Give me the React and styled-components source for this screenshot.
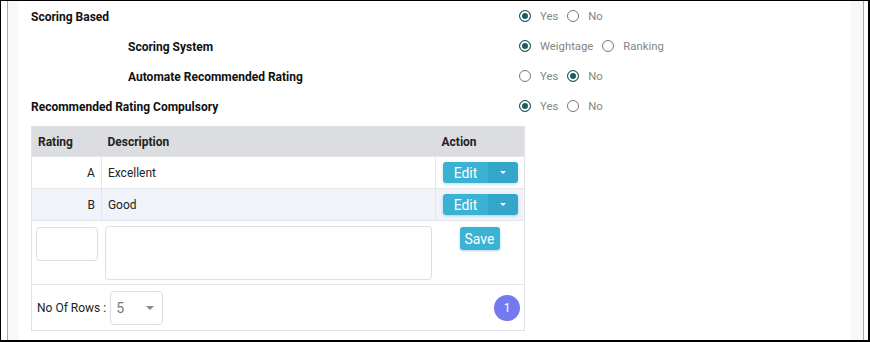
import React from "react";
import styled, { createGlobalStyle } from "styled-components";

const GlobalStyle = createGlobalStyle`
  html, body { margin: 0; padding: 0; background: #fff; }
  body { font-family: Roboto, "Liberation Sans", Arial, sans-serif; }
  * { box-sizing: border-box; }
`;

const Frame = styled.div`
  width: 870px;
  height: 342px;
  border: solid #000;
  border-width: 1px 2px 2px 1px;
  padding: 0 4px 0 6px;
  background: #fff;
  display: flex;
  overflow: hidden;
`;

const Panel = styled.div`
  flex: 1;
  display: flex;
  border-left: 1px solid #7cb9e8;
  border-right: 1px solid #7cb9e8;
  background: #f8f8f8;
  padding: 0 12px 0 10px;
`;

const Content = styled.div`
  flex: 1;
  background: #fff;
  padding: 0 0 0 13px;
`;

const FormRow = styled.div`
  display: grid;
  grid-template-columns: 488px 1fr;
  align-items: center;
  height: 30px;
`;

const FieldLabel = styled.div`
  font-size: 12px;
  font-weight: 700;
  color: #111;
  padding-left: ${(p) => (p.$indent ? "97px" : "0")};
  padding-top: 1px;
`;

const Options = styled.div`
  display: flex;
  align-items: center;
  gap: 9px;
`;

const Option = styled.label`
  display: flex;
  align-items: center;
  gap: 9px;
  font-size: 11.3px;
  color: #858585;
`;

const Radio = styled.span`
  width: 12px;
  height: 12px;
  border-radius: 50%;
  border: 1px solid ${(p) => (p.$on ? "#1f5c5b" : "#777")};
  background: ${(p) => (p.$on ? "#1f5c5b" : "#fff")};
  box-shadow: ${(p) => (p.$on ? "inset 0 0 0 2px #fff" : "none")};
`;

const Table = styled.table`
  margin-top: 5px;
  width: 494px;
  border-collapse: collapse;
  border: 1px solid #dfe1e5;
  font-size: 12px;
  color: #222;
`;

const Th = styled.th`
  background: #dcdde0;
  height: 30px;
  text-align: left;
  font-weight: 700;
  padding: 0 6px;
  width: ${(p) => p.$w || "auto"};
`;

const Tr = styled.tr`
  background: ${(p) => (p.$alt ? "#f0f3fa" : "#fff")};
  border-top: 1px solid #e4e6ea;
`;

const Td = styled.td`
  height: 32px;
  padding: 0 6px;
  text-align: ${(p) => (p.$right ? "right" : "left")};
  border-left: ${(p) => (p.$sep ? "1px solid #e4e6ea" : "none")};
  vertical-align: ${(p) => (p.$top ? "top" : "middle")};
`;

const EditGroup = styled.div`
  display: inline-flex;
  height: 21px;
  margin-left: 1px;
  border-radius: 3px;
  overflow: hidden;
  box-shadow: 0 1px 3px rgba(40, 150, 190, 0.35);
`;

const BtnPart = styled.span`
  display: flex;
  align-items: center;
  justify-content: center;
  width: ${(p) => p.$w};
  background: ${(p) => (p.$dark ? "#34a6c9" : "#3bb2d4")};
  color: #fff;
  font-size: 14px;
`;

const Caret = styled.span`
  width: 0;
  height: 0;
  border-left: ${(p) => p.$s || 3}px solid transparent;
  border-right: ${(p) => p.$s || 3}px solid transparent;
  border-top: ${(p) => p.$s || 3}px solid ${(p) => p.$color || "#fff"};
`;

const InputBox = styled.div`
  width: ${(p) => p.$w};
  height: ${(p) => p.$h};
  border: 1px solid #dcdfe3;
  border-radius: 4px;
  background: #fff;
  margin-top: ${(p) => p.$mt};
  margin-left: ${(p) => p.$ml || "0"};
`;

const SaveBtn = styled.button`
  margin: 6px 0 0 24px;
  width: 40px;
  height: 23px;
  border: none;
  border-radius: 3px;
  background: #3bb2d4;
  color: #fff;
  font-family: inherit;
  font-size: 14px;
  padding: 0;
  box-shadow: 0 1px 3px rgba(40, 150, 190, 0.35);
`;

const Footer = styled.div`
  display: flex;
  align-items: center;
  height: 45px;
  padding: 0 4px 0 5px;
  font-size: 12px;
  color: #222;
`;

const SelectBox = styled.div`
  margin-left: 4px;
  width: 53px;
  height: 34px;
  border: 1px solid #dcdfe3;
  border-radius: 4px;
  display: flex;
  align-items: center;
  justify-content: space-between;
  padding: 0 8px 0 5px;
  font-size: 14px;
  color: #777;
`;

const PageDot = styled.span`
  margin-left: auto;
  width: 26px;
  height: 26px;
  border-radius: 50%;
  background: #7479ee;
  color: #fff;
  font-size: 12px;
  display: flex;
  align-items: center;
  justify-content: center;
`;

const fields = [
  { label: "Scoring Based", opts: ["Yes", "No"], on: 0 },
  { label: "Scoring System", indent: true, opts: ["Weightage", "Ranking"], on: 0 },
  { label: "Automate Recommended Rating", indent: true, opts: ["Yes", "No"], on: 1 },
  { label: "Recommended Rating Compulsory", opts: ["Yes", "No"], on: 0 },
];

const ratings = [
  { r: "A", d: "Excellent" },
  { r: "B", d: "Good" },
];

export default function App() {
  return (
    <>
      <GlobalStyle />
      <Frame>
        <Panel>
          <Content>
            {fields.map((f) => (
              <FormRow key={f.label}>
                <FieldLabel $indent={f.indent}>{f.label}</FieldLabel>
                <Options>
                  {f.opts.map((o, i) => (
                    <Option key={o}>
                      <Radio $on={i === f.on} />
                      {o}
                    </Option>
                  ))}
                </Options>
              </FormRow>
            ))}
            <Table>
              <thead>
                <tr>
                  <Th $w="71px">Rating</Th>
                  <Th $w="335px">Description</Th>
                  <Th>Action</Th>
                </tr>
              </thead>
              <tbody>
                {ratings.map((row, i) => (
                  <Tr key={row.r} $alt={i % 2 === 1}>
                    <Td $right>{row.r}</Td>
                    <Td $sep>{row.d}</Td>
                    <Td $sep>
                      <EditGroup>
                        <BtnPart $w="45px">Edit</BtnPart>
                        <BtnPart $w="30px" $dark>
                          <Caret />
                        </BtnPart>
                      </EditGroup>
                    </Td>
                  </Tr>
                ))}
                <Tr>
                  <Td $top style={{ height: 64, padding: 0 }}>
                    <InputBox $w="62px" $h="34px" $mt="6px" $ml="4px" />
                  </Td>
                  <Td $top style={{ padding: 0 }}>
                    <InputBox $w="327px" $h="54px" $mt="5px" $ml="4px" />
                  </Td>
                  <Td $top style={{ padding: 0 }}>
                    <SaveBtn>Save</SaveBtn>
                  </Td>
                </Tr>
                <Tr>
                  <td colSpan={3} style={{ padding: 0 }}>
                    <Footer>
                      No Of Rows :
                      <SelectBox>
                        5
                        <Caret $color="#888" $s={4} />
                      </SelectBox>
                      <PageDot>1</PageDot>
                    </Footer>
                  </td>
                </Tr>
              </tbody>
            </Table>
          </Content>
        </Panel>
      </Frame>
    </>
  );
}
